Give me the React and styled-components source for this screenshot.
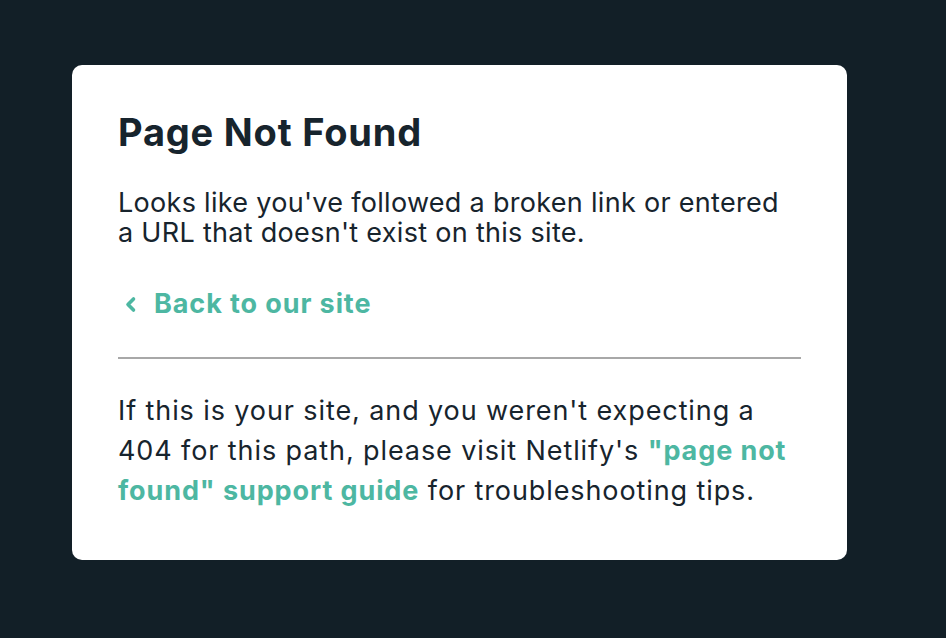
import React from "react";
import styled, { createGlobalStyle } from "styled-components";

const GlobalStyle = createGlobalStyle`
  html, body {
    margin: 0;
    padding: 0;
    background: #121f27;
  }
  body {
    font-family: Inter, "Noto Sans", sans-serif;
    -webkit-font-smoothing: antialiased;
  }
`;

const Page = styled.main`
  min-height: 638px;
  padding: 65px 0 0 72px;
  box-sizing: border-box;
`;

const Card = styled.section`
  width: 775px;
  height: 495px;
  box-sizing: border-box;
  padding: 46px 46px;
  background: #ffffff;
  border-radius: 10px;
  color: #17242d;
`;

const Title = styled.h1`
  margin: 0;
  font-size: 38px;
  line-height: 43px;
  font-weight: 700;
  letter-spacing: 0.8px;
`;

const Text = styled.p`
  margin: ${(p) => p.$margin || "0"};
  font-size: 27px;
  line-height: ${(p) => p.$lh || "30px"};
  font-weight: 400;
  letter-spacing: ${(p) => p.$spacing || "0.3px"};
`;

const TealLink = styled.a`
  color: #4db7a2;
  font-weight: 700;
  letter-spacing: 0.9px;
  text-decoration: none;
`;

const BackLink = styled(TealLink)`
  display: flex;
  align-items: center;
  gap: 17px;
  margin-top: 41px;
  padding-left: 6px;
  font-size: 27px;
  line-height: 30px;

  svg {
    flex: none;
  }
`;

const Divider = styled.hr`
  margin: 38px 0 32px;
  border: none;
  border-top: 2px solid #a8a8a8;
`;

const Chevron = () => (
  <svg width="13" height="17" viewBox="0 0 13 17" aria-hidden="true">
    <polyline
      points="9.5,3 4,8.5 9.5,14"
      fill="none"
      stroke="currentColor"
      strokeWidth="3.6"
      strokeLinecap="round"
      strokeLinejoin="round"
    />
  </svg>
);

export default function App() {
  return (
    <>
      <GlobalStyle />
      <Page>
        <Card>
          <Title>Page Not Found</Title>
          <Text $margin="34px 0 0">
            Looks like you've followed a broken link or entered a URL that
            doesn't exist on this site.
          </Text>
          <BackLink href="#">
            <Chevron />
            Back to our site
          </BackLink>
          <Divider />
          <Text $lh="40px" $spacing="0.9px">
            If this is your site, and you weren't expecting a 404 for this
            path, please visit Netlify's{" "}
            <TealLink href="#">"page not found" support guide</TealLink> for
            troubleshooting tips.
          </Text>
        </Card>
      </Page>
    </>
  );
}
